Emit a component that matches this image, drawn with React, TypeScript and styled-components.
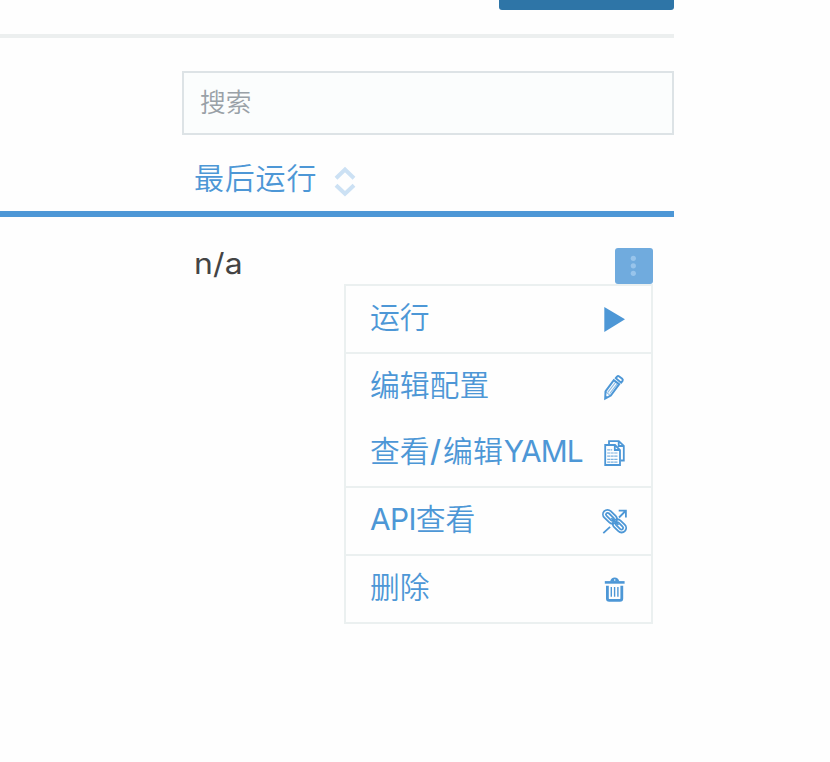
import React from "react";
import styled, { createGlobalStyle } from "styled-components";

const BLUE = "#4d97d6";
const LINE = "#ebf0f0";

const GlobalStyle = createGlobalStyle`
  * { box-sizing: border-box; }
  body {
    margin: 0;
    background: #fefefe;
    font-family: Inter, "Noto Sans CJK SC", sans-serif;
    overflow: hidden;
  }
`;

const Page = styled.main`
  width: 674px;
  height: 762px;
  display: flex;
  flex-direction: column;
`;

const Header = styled.header`
  height: 38px;
  border-bottom: 4px solid #ecefef;
  display: flex;
  justify-content: flex-end;
  align-items: flex-start;
`;

const PrimaryButton = styled.button`
  width: 175px;
  height: 10px;
  padding: 0;
  border: 0;
  border-radius: 0 0 3px 3px;
  background: #2e75a7;
`;

const SearchInput = styled.input`
  width: 492px;
  height: 64px;
  margin: 33px 0 0;
  align-self: flex-end;
  padding: 0 16px 2px;
  border: 2px solid #dde3e6;
  border-radius: 0;
  background: #fbfdfd;
  font: 350 25.7px/40px Inter, "Noto Sans CJK SC", sans-serif;
  outline: 0;
  &::placeholder {
    color: #99a1a7;
    opacity: 1;
  }
`;

const TableHead = styled.div`
  height: 82px;
  padding: 21px 0 0 194px;
  border-bottom: 6px solid ${BLUE};
  display: flex;
  align-items: flex-start;
  gap: 17px;
  color: ${BLUE};
  font-size: 30px;
  font-weight: 350;
  line-height: 44px;
  letter-spacing: 0.8px;
`;

const SortIcon = styled.svg`
  width: 22px;
  height: 32px;
  margin-top: 9px;
`;

const TableRow = styled.div`
  padding: 31px 21px 0 194px;
  display: flex;
  justify-content: space-between;
  align-items: flex-start;
`;

const CellText = styled.span`
  color: #444;
  font-size: 29px;
  line-height: 32px;
  letter-spacing: 0.2px;
  transform: scaleX(1.1);
  transform-origin: left;
`;

const Actions = styled.div`
  display: flex;
  flex-direction: column;
  align-items: flex-end;
`;

const MoreButton = styled.button`
  width: 38px;
  height: 36px;
  padding: 0;
  border: 0;
  border-radius: 3px;
  background: #70abde;
  svg { display: block; }
`;

const Menu = styled.div`
  width: 309px;
  border: 2px solid ${LINE};
  background: #fefefe;
`;

const MenuGroup = styled.div`
  & + & { border-top: 2px solid ${LINE}; }
`;

const MenuItem = styled.a`
  height: 66px;
  padding: 0 24px 4px 24px;
  display: flex;
  align-items: center;
  justify-content: space-between;
  color: ${BLUE};
  font-size: 29.8px;
  font-weight: 350;
  line-height: 44px;
  white-space: nowrap;
`;

const Latin = styled.span<{ $spacing?: number; $lead?: number; $weight?: number }>`
  font-weight: ${(p) => p.$weight ?? 400};
  letter-spacing: ${(p) => p.$spacing ?? 0}px;
  margin-left: ${(p) => p.$lead ?? 0}px;
`;

const Glyph = styled.svg`
  width: 30px;
  height: 30px;
  flex: none;
  margin-top: 3px;
  fill: none;
  stroke: ${BLUE};
`;

const PlayIcon = () => (
  <Glyph viewBox="0 0 30 30"><path d="M7.3 3 28 15.3 7.3 28Z" fill={BLUE} stroke="none" /></Glyph>
);

const PencilIcon = () => (
  <Glyph viewBox="0 0 30 30" strokeWidth="2">
    <path d="m8.5 19.4 8.3-11.3 5.4 4.1-8.4 11.4-5.6 3Z" />
    <path d="m18.8 6.2 1.2-1.6q1-1 2.2-.1l3 2.3q1.1 1 .2 2.3l-1.3 1.6Z" />
    <path d="m8.5 19.6 4.9 4M10.8 20.3l8-10.3M12.8 21.5l7.8-10.2" strokeWidth="1.2" opacity=".65" />
    <path d="m8.1 23.6 2.7 1.5-2.9 1.8Z" fill={BLUE} stroke="none" />
  </Glyph>
);

const FilesIcon = () => (
  <Glyph viewBox="0 0 30 30" strokeWidth="1.8">
    <path d="M12 6.4V3.2h9.8l5 4.7v14.6h-3.2M21.7 3.5V8h4.8" />
    <path d="M8.2 7H18l5 5v15H8.2ZM17.8 7.2V12H23" />
    <path d="M10.2 11.8h5M10.2 15h10.8M10.2 18.2h10.8M10.2 21.4h10.8M10.2 24.2h10.8" strokeWidth="1.2" strokeDasharray="3 .5" opacity=".75" />
  </Glyph>
);

const LinkIcon = () => (
  <Glyph viewBox="0 0 30 30" strokeWidth="1.8">
    <g transform="translate(17.9 15.5) rotate(44)">
      <rect x="-14.8" y="-4.6" width="16" height="9.2" rx="4.6" />
      <rect x="-11.8" y="-1.7" width="10" height="3.4" rx="1.7" />
      <rect x="-1.2" y="-4.6" width="15" height="9.2" rx="4.6" />
      <rect x="1.8" y="-1.7" width="9" height="3.4" rx="1.7" />
      <path d="M-5 0H5" strokeWidth="1.7" />
    </g>
    <path d="M21.7 4.6h7.2v7M28.5 5l-6.5 6.5M6.3 27.2l6.8-6.4" strokeWidth="1.8" />
  </Glyph>
);

const TrashIcon = () => (
  <Glyph viewBox="0 0 30 30">
    <path d="M7.8 8.4h19.8" strokeWidth="2.6" />
    <path d="M13.1 7.5q1-3.9 4.6-3.9t4.6 3.9Z" fill={BLUE} stroke="none" />
    <circle cx="17.7" cy="6" r=".8" fill="#fefefe" stroke="none" />
    <path d="M10.4 11.7v12.8q0 1.8 1.8 1.8h10.8q1.8 0 1.8-1.8V11.7" strokeWidth="2.8" />
    <path d="M14.3 13v9.8M17.6 13v9.8M20.9 13v9.8" strokeWidth="1.4" />
  </Glyph>
);

export default function App() {
  return (
    <>
      <GlobalStyle />
      <Page>
        <Header><PrimaryButton aria-label="新建" /></Header>
        <SearchInput placeholder="搜索" />
        <TableHead>
          <span>最后运行</span>
          <SortIcon viewBox="0 0 22 32" fill="none" stroke="#cce1f4" strokeWidth="4">
            <path d="m2 13.2 9-8.6 9 8.6M2 20.2l9 8.6 9-8.6" />
          </SortIcon>
        </TableHead>
        <TableRow>
          <CellText>n/a</CellText>
          <Actions>
            <MoreButton aria-label="更多">
              <svg width="38" height="36" viewBox="0 0 38 36" fill="#98c4eb">
                <circle cx="18.3" cy="10.3" r="2.6" />
                <circle cx="18.3" cy="17.8" r="2.6" />
                <circle cx="18.3" cy="25.3" r="2.6" />
              </svg>
            </MoreButton>
            <Menu>
              <MenuGroup><MenuItem>运行<PlayIcon /></MenuItem></MenuGroup>
              <MenuGroup>
                <MenuItem>编辑配置<PencilIcon /></MenuItem>
                <MenuItem><span>查看<Latin $weight={500} $lead={0.5} $spacing={2}>/</Latin>编辑<Latin $lead={1} $spacing={-0.8}>YAML</Latin></span><FilesIcon /></MenuItem>
              </MenuGroup>
              <MenuGroup><MenuItem><span><Latin $spacing={-0.6}>API</Latin>查看</span><LinkIcon /></MenuItem></MenuGroup>
              <MenuGroup><MenuItem>删除<TrashIcon /></MenuItem></MenuGroup>
            </Menu>
          </Actions>
        </TableRow>
      </Page>
    </>
  );
}
